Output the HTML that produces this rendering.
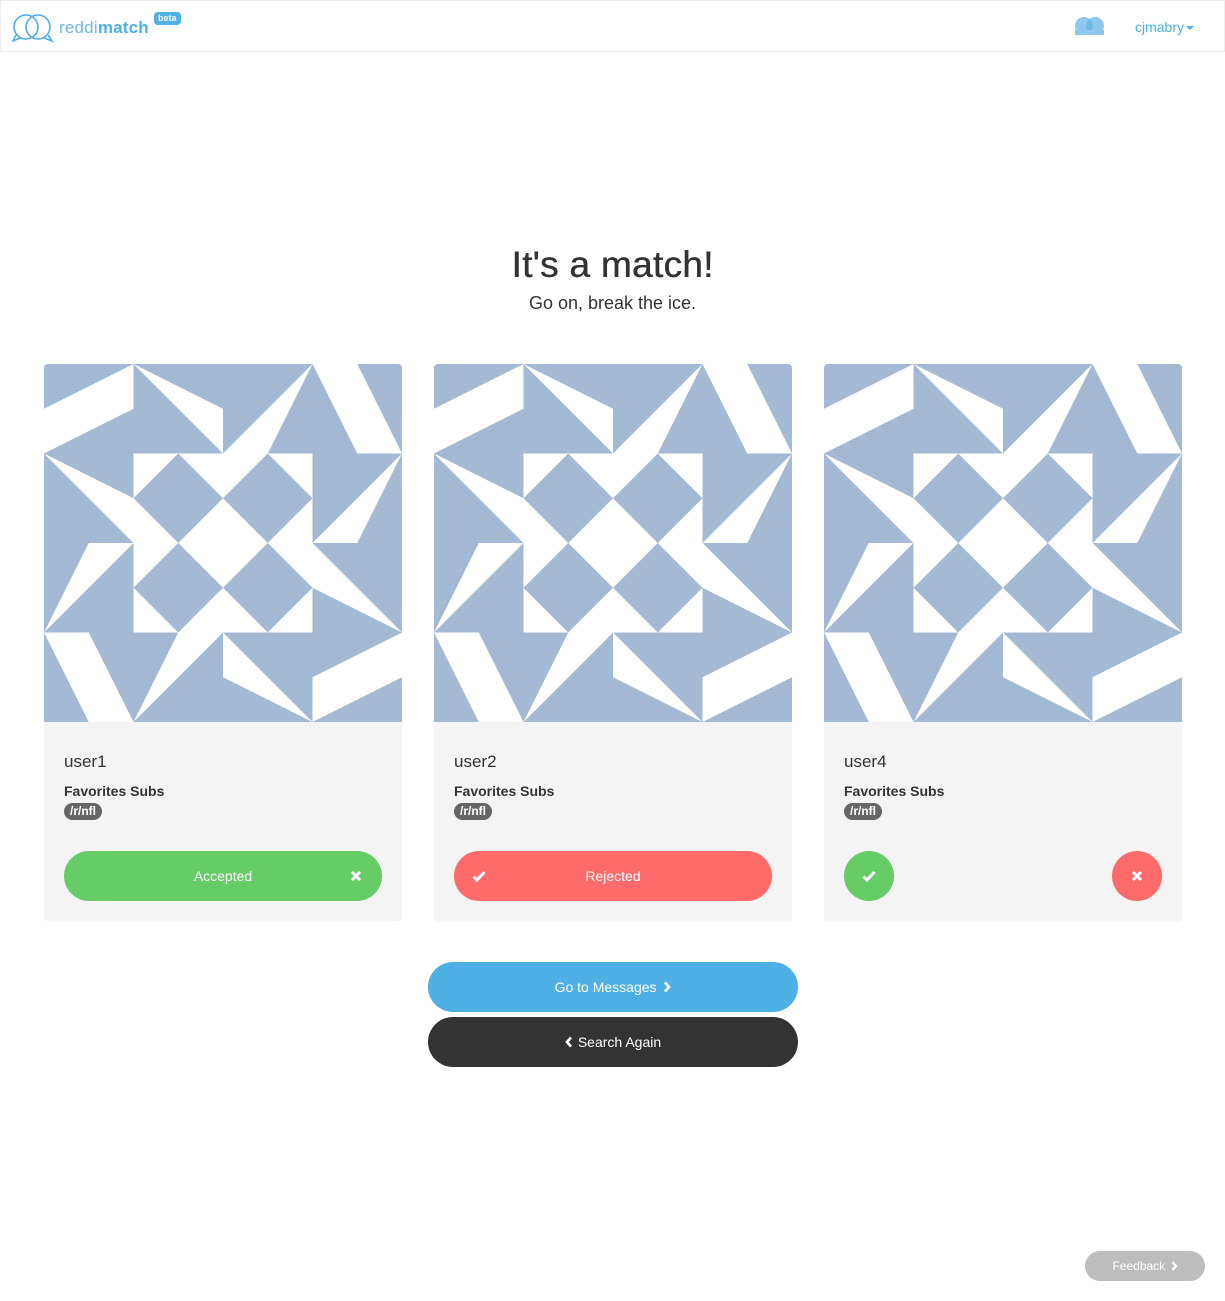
<!DOCTYPE html>
<html><head><meta charset="utf-8">
<style>
*{box-sizing:border-box;margin:0;padding:0}
body{width:1225px;height:1301px;background:#fff;font-family:"Liberation Sans",Arial,sans-serif;color:#333;position:relative;overflow:hidden}
.hdr{position:absolute;left:0;top:0;width:1225px;height:52px;border:1px solid #eee;background:#fff}
.logo{position:absolute;left:11px;top:12px}
.brand{position:absolute;left:58px;top:17px;font-size:17px;color:#6fb9e6;letter-spacing:0.2px}
.brand b{font-weight:bold;color:#4fb0e6}
.beta{position:absolute;left:153px;top:11px;background:#4fb0e6;color:#fff;font-size:9px;font-weight:bold;padding:1px 4px;border-radius:4px;line-height:11px}
.user{position:absolute;left:1134px;top:18px;font-size:14px;color:#4fb0e6}
.caret{display:inline-block;width:0;height:0;border-left:4px solid transparent;border-right:4px solid transparent;border-top:4px solid #4fb0e6;vertical-align:middle;margin-left:2px}
h1{position:absolute;top:244px;width:100%;text-align:center;font-size:37px;font-weight:normal;color:#333;letter-spacing:0.3px;text-shadow:0.5px 0 0 #333}
.sub{position:absolute;top:293px;width:100%;text-align:center;font-size:18px;color:#333}
.card{position:absolute;top:364px;width:358px;height:557px;background:#f4f4f4;border-radius:4px;overflow:hidden}
.card svg.id{display:block}
.name{position:absolute;left:20px;top:388px;font-size:17px;color:#333}
.fav{position:absolute;left:20px;top:419px;font-size:14px;font-weight:bold;color:#333}
.tag{position:absolute;left:20px;top:439px;background:#666;color:#fff;font-size:12px;font-weight:bold;border-radius:9px;padding:2px 6px;line-height:13px}
.btn{position:absolute;left:20px;top:487px;width:318px;height:50px;border-radius:25px;color:#fff;font-size:14px;text-align:center;line-height:50px}
.circ{position:absolute;top:487px;width:50px;height:50px;border-radius:25px}
.big{position:absolute;left:428px;width:370px;height:50px;border-radius:25px;color:#fff;font-size:14px;text-align:center;line-height:50px}
.fb{position:absolute;left:1085px;top:1251px;width:120px;height:30px;border-radius:15px;background:#bdbdbd;color:#fff;font-size:12px;text-align:center;line-height:30px}
.ic{position:absolute}
</style></head><body>
<svg width="0" height="0" style="position:absolute">
<defs>
<g id="idc">
<rect width="8" height="8" fill="#a3b9d4"/>
<g fill="#fff">
<polygon points="0,1 2,0 2,1 0,2"/>
<polygon points="2,0 4,1 4,2"/>
<polygon points="6,0 5,2 4,2"/>
<polygon points="6,0 7,0 8,2 7,2"/>
<polygon points="0,2 2,3 2,4"/>
<polygon points="8,2 6,4 7,4"/>
<polygon points="2,4 0,6 1,4"/>
<polygon points="6,4 8,6 6,5"/>
<polygon points="0,6 1,6 2,8 1,8"/>
<polygon points="4,6 2,8 3,6"/>
<polygon points="6,8 4,7 4,6"/>
<polygon points="8,6 8,7 6,8 6,7"/>
<rect x="2" y="2" width="4" height="4"/>
</g>
<g fill="#a3b9d4">
<polygon points="3,2 4,3 3,4 2,3"/>
<polygon points="5,2 6,3 5,4 4,3"/>
<polygon points="3,4 4,5 3,6 2,5"/>
<polygon points="5,4 6,5 5,6 4,5"/>
</g>
</g>
</defs>
</svg>

<div class="hdr">
<svg class="logo" width="44" height="30" viewBox="0 0 44 30"><g fill="none" stroke="#4fb0e6" stroke-width="1.6"><path d="M14 2a12 12 0 1 0 0 24a12 12 0 0 0 0-24z"/><path d="M26 2a12 12 0 1 1 0 24a12 12 0 0 1 0-24z"/><path d="M4 22 L1 28 L8 25"/><path d="M36 22 L40 28 L32 25"/></g></svg>
<div class="brand">reddi<b>match</b></div>
<div class="beta">beta</div>
<svg class="ic" style="left:1073px;top:15px" width="31" height="21" viewBox="0 0 31 21"><circle cx="10" cy="10" r="9" fill="#8ec8ef"/><circle cx="21" cy="10" r="9" fill="#8ec8ef"/><path d="M15.5 3a9 9 0 0 1 0 14a9 9 0 0 1 0-14z" fill="#6fb9e6"/><rect x="1" y="14" width="29" height="5" fill="#8ec8ef"/></svg>
<div class="user">cjmabry<span class="caret"></span></div>
</div>

<h1>It's a match!</h1>
<div class="sub">Go on, break the ice.</div>

<div class="card" style="left:44px">
<svg class="id" width="358" height="358" viewBox="0 0 8 8"><use href="#idc"/></svg>
<div class="name">user1</div><div class="fav">Favorites Subs</div><div class="tag">/r/nfl</div>
<div class="btn" style="background:#66cc66">Accepted
<svg class="ic" style="left:286px;top:19px" width="12" height="12" viewBox="0 0 12 12"><path d="M2 2L10 10M10 2L2 10" stroke="#fff" stroke-width="3"/></svg></div>
</div>

<div class="card" style="left:434px">
<svg class="id" width="358" height="358" viewBox="0 0 8 8"><use href="#idc"/></svg>
<div class="name">user2</div><div class="fav">Favorites Subs</div><div class="tag">/r/nfl</div>
<div class="btn" style="background:#ff6b6b">Rejected
<svg class="ic" style="left:18px;top:19px" width="14" height="12" viewBox="0 0 14 12"><path d="M1.5 6.5L5 10L12.5 2" fill="none" stroke="#fff" stroke-width="3"/></svg></div>
</div>

<div class="card" style="left:824px">
<svg class="id" width="358" height="358" viewBox="0 0 8 8"><use href="#idc"/></svg>
<div class="name">user4</div><div class="fav">Favorites Subs</div><div class="tag">/r/nfl</div>
<div class="circ" style="left:20px;background:#66cc66"><svg class="ic" style="left:18px;top:19px" width="14" height="12" viewBox="0 0 14 12"><path d="M1.5 6.5L5 10L12.5 2" fill="none" stroke="#fff" stroke-width="3"/></svg></div>
<div class="circ" style="left:288px;background:#ff6b6b"><svg class="ic" style="left:19px;top:19px" width="12" height="12" viewBox="0 0 12 12"><path d="M2 2L10 10M10 2L2 10" stroke="#fff" stroke-width="3"/></svg></div>
</div>

<div class="big" style="top:962px;background:#4fb0e6">Go to Messages <svg style="vertical-align:-1px;margin-left:3px" width="8" height="12" viewBox="0 0 8 12"><path d="M2 1.5L6 6L2 10.5" fill="none" stroke="#fff" stroke-width="2.6"/></svg></div>
<div class="big" style="top:1017px;background:#333"><svg style="vertical-align:-1px;margin-right:5px" width="8" height="12" viewBox="0 0 8 12"><path d="M6 1.5L2 6L6 10.5" fill="none" stroke="#fff" stroke-width="2.6"/></svg>Search Again</div>

<div class="fb">Feedback <svg style="vertical-align:-1px;margin-left:2px" width="7" height="10" viewBox="0 0 7 10"><path d="M1.5 1L5 5L1.5 9" fill="none" stroke="#fff" stroke-width="2.2"/></svg></div>
</body></html>
